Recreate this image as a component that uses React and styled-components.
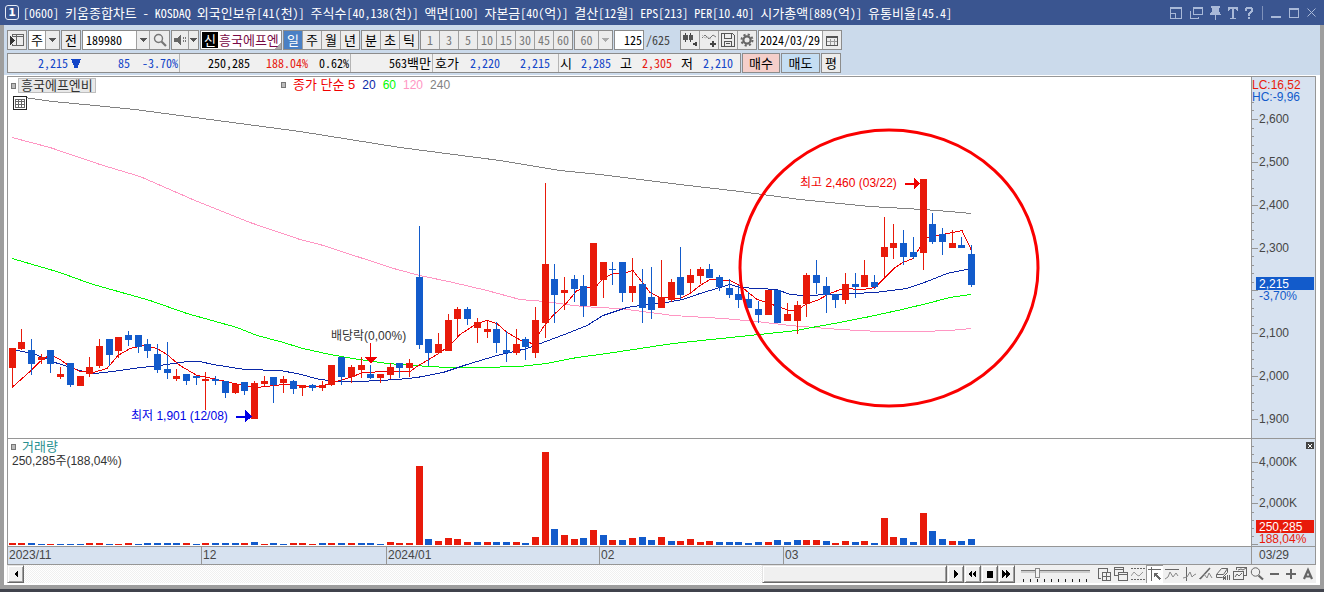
import React from 'react';
import styled, { createGlobalStyle, css } from 'styled-components';

const RED = '#e81a0a';
const BLUE = '#125bcb';
const LINE = '#969696';
const MONO = '"Noto Sans Mono CJK KR", "Noto Sans CJK KR", monospace';
const SANS = '"Liberation Sans", "Noto Sans CJK KR", sans-serif';

const Global = createGlobalStyle`
	* { box-sizing: border-box; }
	body { margin: 0; background: #40434c; }
	button, input, select { font: inherit; color: inherit; margin: 0; padding: 0; border: 0; border-radius: 0; }
`;

/* ---------- data ---------- */

// [up, high, body top, body bottom, low, volume]
const candles = [
	[1,348,348,368,388,2],[1,329,342,349,350,2],[0,339,350,364,375,2],[1,354,357,360,364,1],[0,350,350,364,373,1],
	[1,367,374,377,379,1],[0,363,363,385,387,1],[1,376,376,386,386,1],[1,357,367,374,377,2],[1,339,346,366,368,2],
	[0,339,339,355,366,1],[1,337,337,351,358,1],[0,331,335,340,346,2],[0,335,335,347,353,1],[0,339,344,351,358,2],
	[0,344,354,370,373,2],[0,342,369,373,379,2],[1,369,376,379,381,2],[0,374,374,381,385,2],[0,376,376,378,385,1],
	[1,372,379,381,410,2],[0,376,379,381,385,2],[0,381,381,393,398,2],[1,384,384,393,394,2],[0,382,382,391,395,2],
	[1,381,383,419,419,3],[1,376,381,384,386,1],[0,377,377,385,403,2],[1,376,379,383,393,1],[0,380,381,389,394,2],
	[1,385,385,388,396,2],[0,384,385,388,391,1],[1,381,385,388,391,2],[1,365,365,385,386,2],[0,357,357,377,385,2],
	[1,365,367,377,383,2],[1,357,365,370,378,2],[0,365,374,378,379,2],[1,374,374,378,383,1],[1,363,367,375,379,3],
	[0,363,363,368,378,2],[1,359,363,368,377,2],[0,226,277,345,349,79],[0,339,339,353,366,6],[1,333,344,353,354,4],
	[1,314,320,351,351,7],[1,307,309,319,336,6],[0,307,309,319,325,3],[1,318,322,328,343,3],[1,321,329,332,338,3],
	[0,322,329,343,353,3],[0,331,350,353,362,3],[1,329,344,353,355,3],[0,337,339,347,360,2],[1,307,320,353,358,8],
	[1,183,264,323,338,93],[0,264,279,295,323,16],[1,277,290,293,310,10],[0,275,279,289,302,6],[0,275,286,306,317,7],
	[1,243,243,306,306,15],[1,262,262,280,298,10],[0,262,269,270,285,5],[0,262,262,293,302,5],[1,258,286,293,302,7],
	[0,269,284,308,323,8],[0,267,297,310,319,5],[1,260,297,308,308,8],[1,279,282,300,302,4],[0,247,277,295,299,4],
	[1,269,275,283,292,6],[1,267,269,276,284,3],[0,264,269,278,278,4],[0,275,277,287,291,3],[0,279,288,295,298,3],
	[0,285,294,300,308,3],[0,292,299,308,308,2],[0,301,309,315,323,3],[1,290,290,315,315,3],[0,290,290,323,323,5],
	[1,303,314,321,321,3],[1,301,305,321,334,5],[1,273,275,304,317,5],[0,260,275,283,294,5],[0,277,286,295,313,4],
	[0,294,294,300,308,2],[1,273,284,300,304,4],[0,273,284,287,298,3],[1,260,275,287,287,4],[0,275,282,287,289,2],
	[1,217,247,257,277,27],[1,224,243,248,259,8],[0,230,243,257,265,7],[0,237,252,257,259,3],[1,179,179,253,270,32],
	[0,213,224,242,244,14],[0,228,234,242,255,6],[1,230,243,248,248,4],[0,237,245,248,248,4],[0,245,254,285,287,6],
];

// volume bars follow the day's volume change, not the price
const volumeColors =
	'rrbbrbbbrr' + 'brrbbbbbrb' + 'rbbbrbrbbr' + 'rrbrbrbbbr' + 'rrrbrrrrbr' +
	'bbrbrrbrrb' + 'rbrbrbbrbr' + 'rrrbbbbbrb' + 'bbrrbrrbrb' + 'rrbbrbbrbb';

const averages = [
	{ name: '240', color: '#828282', d: 'M15 96 24 97 53 101 95 105 135 109 240 123 300 131 400 147 500 160 560 170 600 174 680 184 740 191 800 199 820 201 870 206 923 209 950 211 971 213' },
	{ name: '120', color: '#ff96c3', d: 'M12 137 50 147 100 164 140 176 195 200 250 222 300 239 320 244 360 257 397 269 420 275 453 282 487 290 520 299 545 301 573 305 597 307 620 308 650 312 673 315 723 318 757 321 790 325 840 329 880 331 920 331 950 330 971 328' },
	{ name: '60', color: '#00fa00', d: 'M12 258 60 272 90 283 150 300 187 313 237 327 257 335 280 341 303 348 330 354 353 358 387 363 413 365 447 367 480 367 520 366 547 363 577 357 607 353 640 348 673 343 740 336 797 330 817 326 840 322 870 316 902 309 927 303 950 297 971 294' },
	{ name: '20', color: '#0a28a8', d: 'M12 349 17 350 33 353 43 357 55 362 83 371 95 373 113 371 133 368 160 365 187 361 200 361 213 364 245 369 280 370 297 373 320 379 340 381 360 381 397 379 417 377 443 372 467 364 497 355 527 348 543 342 567 333 587 325 603 315 627 307 640 305 660 303 683 299 700 293 720 287 730 284 740 287 777 289 790 294 803 295 833 294 875 292 907 288 927 281 947 273 971 268' },
	{ name: '5', color: '#f00000', d: 'M12 387 30 371 40 361 50 354 60 359 70 366 80 371 93 372 107 368 118 355 130 348 143 345 157 348 167 354 180 365 197 375 213 378 230 382 243 385 257 387 283 384 310 386 320 386 333 382 350 377 363 372 387 371 410 371 417 366 437 354 450 345 460 334 477 323 487 320 497 323 507 332 523 341 533 343 543 327 553 315 567 302 577 290 597 285 603 278 613 273 623 273 633 270 650 292 660 297 680 298 690 293 700 285 710 279 730 280 740 285 757 299 767 302 780 307 790 310 798 309 807 303 817 300 830 293 843 288 863 289 875 287 885 277 895 267 903 262 913 258 920 247 927 237 943 234 962 230 971 249' },
];

const candleX = i => Math.floor(12.2 + i * 9.69);

/* ---------- window ---------- */

const Frame = styled.div`
	min-height: 100vh;
	display: flex;
	flex-direction: column;
	font: 12px/16px ${MONO};
	color: #000;
	background: #40434c;
`;

const TitleBar = styled.header`
	display: flex;
	align-items: center;
	height: 25px;
	padding: 0 5px;
	background: #3a5590;
	color: #fff;
`;

const Badge = styled.span`
	width: 14px;
	height: 15px;
	margin-right: 4px;
	border: 1px solid #e8edf6;
	border-radius: 3px;
	font: bold 11px/13px "DejaVu Sans", sans-serif;
	text-align: center;
`;

const Title = styled.h1`
	flex: 1;
	margin: 0;
	font: 12px/18px ${MONO};
	white-space: pre;
	overflow: hidden;
`;

const Korean = styled.span`
	font-size: 13px;
`;

const WindowButton = styled.button`
	width: ${p => p.$w || 19}px;
	height: 19px;
	display: grid;
	place-items: center;
	background: none;
	color: #a9b9d8;
`;

const Separator = styled.i`
	width: 1px;
	height: 14px;
	margin: 0 3px 0 5px;
	background: #7f92bb;
`;

const Body = styled.main`
	background: #fff;
	border: solid #9e9e9e;
	border-width: 0 4px 4px;
`;

const Tools = styled.div`
	background: #cbdaeb;
	padding: 5px 3px 2px;
`;

const Bar = styled.div`
	display: flex;
	gap: 1px;
	height: 20px;
	margin-bottom: ${p => p.$last ? 0 : 3}px;
`;

const Group = styled.div`
	display: flex;
	width: ${p => p.$w}px;
	border: 1px solid #8c8c8c;
	background: #ececec;
	> * + * { border-left: 1px solid #a0a0a0; }
`;

const Tool = styled.button`
	flex: ${p => p.$w ? `0 0 ${p.$w}px` : '1 1 0'};
	min-width: 0;
	display: grid;
	place-items: center;
	font-size: ${p => p.$dim ? 12 : 13}px;
	background: ${p => p.$on ? '#4a80c4' : '#ececec'};
	color: ${p => p.$on ? '#fff' : p.$dim ? '#787878' : '#000'};
`;

const Field = styled.input`
	flex: 1;
	min-width: 0;
	width: 100%;
	padding: 0 ${p => p.$tight ? 1 : 3}px;
	text-align: ${p => p.$right ? 'right' : 'left'};
	background: #fff;
	outline: none;
`;

const Pick = styled.select`
	flex: 1;
	min-width: 0;
	padding: 0 1px;
	appearance: none;
	text-align: center;
	font-size: ${p => p.$dim ? 12 : 13}px;
	background: ${p => p.$dim ? '#ececec' : '#fff'};
	color: ${p => p.$dim ? '#787878' : '#000'};
`;

const Stock = styled.div`
	display: flex;
	align-items: center;
	width: 82px;
	padding-left: 1px;
	border: 1px solid #8c8c8c;
	background: linear-gradient(135deg, transparent 50%, #aaa 50%) 100% 100% / 6px 6px no-repeat #fff;
	color: #780a46;
	font-size: 13px;
	white-space: nowrap;
	b {
		flex: none;
		width: 16px;
		height: 16px;
		margin-right: 1px;
		background: #000;
		color: #fff;
		font-weight: 400;
		text-align: center;
	}
`;

const Total = styled.span`
	width: 34px;
	padding-left: 1px;
	line-height: 20px;
	color: #444;
`;

const Quotes = styled.div`
	display: flex;
	width: 734px;
	border: 1px solid #8c8c8c;
	background: #f0f0f0;
	line-height: 18px;
`;

const Cell = styled.div`
	display: flex;
	width: ${p => p.$w}px;
	border-right: 1px solid #b4b4b4;
	white-space: nowrap;
	&:last-child { border: 0; flex: 1; }
`;

const tones = { up: '#e6190f', down: '#1446c8' };

const Value = styled.span`
	width: ${p => p.$w}px;
	flex: none;
	text-align: right;
	color: ${p => tones[p.$tone] || '#000'};
`;

const Order = styled.button`
	width: ${p => p.$w}px;
	border: 1px solid #8c8c8c;
	font-size: 13px;
	line-height: 16px;
	background: ${p => p.$bg};
`;

/* ---------- chart ---------- */

const Chart = styled.section`
	display: grid;
	grid-template-columns: 1fr 64px;
	margin: 1px 4px 0 3px;
	border: 1px solid ${LINE};
	font: 12px/14px ${SANS};
`;

const Pane = styled.div`
	position: relative;
	height: ${p => p.$h}px;
	min-width: 0;
	overflow: hidden;
	border-bottom: ${p => p.$end ? 0 : 1}px solid ${LINE};
	svg { display: block; }
`;

const Scale = styled(Pane)`
	border-left: 1px solid ${LINE};
	background: #d7e2f0;
	color: #464646;
`;

const Legend = styled.div`
	position: absolute;
	top: 1px;
	left: ${p => p.$x}px;
	display: flex;
	align-items: center;
	gap: ${p => p.$gap}px;
	color: ${p => p.$color || '#333'};
`;

const Dot = styled.i`
	width: 5px;
	height: 6px;
	border: 1px solid #777;
	background: #bbb;
`;

const NameTag = styled.span`
	height: 15px;
	padding: 0 2px;
	border: 1px solid #bebebe;
	background: #e8e8e8;
	color: #333;
	font-size: 13px;
	line-height: 13px;
`;

const GridButton = styled.button`
	position: absolute;
	top: 19px;
	left: 5px;
	width: 14px;
	height: 14px;
	background: #fff;
`;

const VolumeText = styled.div`
	position: absolute;
	top: 15px;
	left: 4px;
	color: #333;
`;

const CloseBox = styled.button`
	position: absolute;
	top: 3px;
	right: 1px;
	width: 8px;
	height: 7px;
	background: #444;
	svg { margin: 0 auto; }
`;

const Months = styled(Pane)`
	display: flex;
	background: #d7e2f0;
	color: #464646;
`;

const Month = styled.span`
	width: ${p => p.$w}px;
	padding-left: 1px;
	line-height: 16px;
	& + & { border-left: 1px solid ${LINE}; }
`;

const LastDate = styled(Scale)`
	padding-left: 7px;
	line-height: 16px;
`;

/* ---------- bottom bar ---------- */

const Footer = styled.footer`
	display: flex;
	height: 18px;
	margin: 0 4px 2px 3px;
	background: #f0f0f0;
`;

const raised = css`
	border: 1px solid;
	border-color: #e3e3e3 #696969 #696969 #e3e3e3;
	box-shadow: inset 1px 1px #fff, inset -1px -1px #a0a0a0;
	background: #f0f0f0;
`;

const ScrollButton = styled.button`
	${raised}
	flex: none;
	width: 17px;
	display: grid;
	place-items: center;
`;

const Track = styled.div`
	flex: 1;
	display: flex;
	justify-content: flex-end;
	background: repeating-conic-gradient(#f0f0f0 0 25%, #fff 0 50%) 0 0 / 2px 2px;
`;

const Thumb = styled.div`
	${raised}
	width: 185px;
`;

const Zoom = styled.label`
	width: 80px;
	padding: 1px 5px 0 6px;
	&::after {
		content: '';
		display: block;
		height: 3px;
		margin-left: 2px;
		background: repeating-linear-gradient(90deg, #222 0 1px, transparent 1px 7px);
	}
`;

const Range = styled.input`
	appearance: none;
	display: block;
	width: 100%;
	height: 13px;
	background: linear-gradient(#777 0 1px, #ccc 1px 3px) 0 4px / 100% 3px no-repeat;
	&::-webkit-slider-thumb {
		appearance: none;
		width: 5px;
		height: 10px;
		border: 1px solid #888;
		background: #f4f4f4;
	}
`;

const ChartTool = styled.button`
	width: 17px;
	display: grid;
	place-items: center;
	color: #666;
	background: ${p => p.$on ? '#fff' : 'none'};
	box-shadow: ${p => p.$on ? 'inset 1px 1px #999' : 'none'};
`;

/* ---------- icons ---------- */

const Icon = ({ w = 14, h = 14, children, ...rest }) => (
	<svg width={w} height={h} viewBox={`0 0 ${w} ${h}`} fill="none" stroke="currentColor" shapeRendering="crispEdges" aria-hidden="true" {...rest}>
		{children}
	</svg>
);

const Down = ({ dim }) => <Icon w={7} h={4}><path d="M0 0h7l-3.5 4z" fill={dim ? '#aaa' : '#555'} stroke="none" /></Icon>;

const Magnifier = () => (
	<Icon stroke="#777" shapeRendering="auto">
		<circle cx="5.5" cy="5.5" r="4" strokeWidth="1.4" />
		<path d="M8.5 8.5l4.5 4.5" strokeWidth="2.2" />
	</Icon>
);

const chartTools = [
	['새 창', <><path d="M4 11.500H1.500v-10h9v3" /><path d="M5.500 5.500h8v8h-8zM9.500 6v7M6 9.500h7" /></>],
	['겹치기', <><path d="M.5 .5h9v8h-9zM.5 2.500h9" /><path d="M4.500 5.500h9v8h-9z" fill="#f0f0f0" /><path d="M4.500 7.500h9" /></>],
	['수치 조회', <><path d="M0 1.500h14M0 12.500h14" strokeDasharray="2 1" /><path d="M0 9l3-4 3 3 2 1 4-4" stroke="#999" shapeRendering="auto" /></>],
	['십자선', <><path d="M0 2.500h13M3.500 0v14" /><path d="M6 6h5l-2 1.500 4 4-1.500 1.500-4-4L6 11z" fill="#666" stroke="none" /></>],
	['추세선', <><path d="M0 2.500h14" /><path d="M0 12l3-2 2-5 3 5 3-4 2 3" stroke="#888" shapeRendering="auto" /></>],
	['수직선', <><path d="M4.500 0v14" /><path d="M1 11l4-1 3-5 2 5 2-2 2-1" stroke="#888" shapeRendering="auto" /></>],
	['각도선', <g shapeRendering="auto"><path d="M1 12L11 1" strokeWidth="1.6" /><path d="M0 12l5-5 3 4 2-5 3 5" stroke="#888" /></g>],
	['전체 지우기', <><path d="M.5 7.500l5-6h6l-4 6zM.5 7.500v3h6l5-5v-4" shapeRendering="auto" /><path d="M7.500 13V9l2 4V9M11.500 8v5M13.500 8v5" /></>],
	['이미지 저장', <><path d="M3.500 3V.5h10v8H11" /><path d="M.5 4.500h10v8H.5z" fill="#f0f0f0" /><path d="M2 10l2-3 2 2 3-3M5 3l3-1 2 1 3-2" shapeRendering="auto" /></>],
	['확대 보기', <g shapeRendering="auto"><circle cx="5.5" cy="5" r="4.2" /><path d="M8.500 8.500l4.500 4" strokeWidth="2.2" /></g>],
	['축소', <path d="M3 7h9" strokeWidth="2" />],
	['확대', <path d="M2 7h10M7 2v10" strokeWidth="2" />],
	['글자', <path d="M3 12L7 3l4 9M4.500 9.500h5" strokeWidth="2.2" shapeRendering="auto" />],
];

/* ---------- parts ---------- */

const title = '[0600] 키움종합차트 - KOSDAQ 외국인보유[41(천)] 주식수[40,138(천)] 액면[100] 자본금[40(억)] 결산[12월] EPS[213] PER[10.40] 시가총액[889(억)] 유통비율[45.4]';

const mixed = text => text.split(/([가-힣]+)/).map((part, i) => i % 2 ? <Korean key={i}>{part}</Korean> : part);

function MainBar() {
	return (
		<Bar>
			<Group $w={20}>
				<Tool aria-label="메뉴">
					<Icon w={14} h={13} stroke="#666"><path d="M2.500 3V.5h11v11h-11V10M6.500 .5v11M3 2.500h10" /><path d="M0 2v9l5-4.500z" fill="#333" stroke="none" /></Icon>
				</Tool>
			</Group>
			<Group $w={32}>
				<Pick aria-label="종목 구분"><option>주</option></Pick>
				<Tool $w={14} aria-label="종목 구분 열기"><Down /></Tool>
			</Group>
			<Group $w={20}><Tool>전</Tool></Group>
			<Group $w={88}>
				<Field aria-label="종목코드" defaultValue="189980" />
				<Tool $w={13} aria-label="최근 종목"><Down /></Tool>
				<Tool $w={20} aria-label="종목 검색"><Magnifier /></Tool>
			</Group>
			<Group $w={28}>
				<Tool aria-label="소리">
					<Icon w={13} h={12}><path d="M0 4h3l4-4v12L3 8H0z" fill="#666" stroke="none" /><path d="M9.500 3v6M11.500 3v6" strokeDasharray="2 1" stroke="#777" /></Icon>
				</Tool>
				<Tool $w={10} aria-label="소리 설정"><Down /></Tool>
			</Group>
			<Stock><b>신</b>흥국에프엔</Stock>
			<Group $w={77}>
				{['일', '주', '월', '년'].map((t, i) => <Tool key={t} $on={i === 0}>{t}</Tool>)}
			</Group>
			<Group $w={58}>
				{['분', '초', '틱'].map(t => <Tool key={t}>{t}</Tool>)}
			</Group>
			<Group $w={153}>
				{[1, 3, 5, 10, 15, 30, 45, 60].map(n => <Tool key={n} $dim>{n}</Tool>)}
			</Group>
			<Group $w={39}>
				<Pick $dim aria-label="분 간격"><option>60</option></Pick>
				<Tool $w={14} aria-label="분 간격 열기"><Down dim /></Tool>
			</Group>
			<Group $w={30}><Field $right $tight aria-label="조회 개수" defaultValue="125" /></Group>
			<Total>/625</Total>
			<Group $w={77}>
				<Tool aria-label="차트 유형">
					<Icon stroke="#444"><path d="M2.500 0v9M7.500 0v9" /><path d="M0 2h5v5H0zM6 2h4v5H6z" fill="#555" stroke="none" /><path d="M14 9v4l-4-2zM10 11h4" fill="#444" /></Icon>
				</Tool>
				<Tool aria-label="지표 추가">
					<Icon stroke="#444"><path d="M0 5l3-3 4 4 4-4 3 2" stroke="#777" shapeRendering="auto" /><path d="M0 2l3 3 3-1 3 2" stroke="#bbb" shapeRendering="auto" /><path d="M11 8v6M8 11h6" strokeWidth="2" /></Icon>
				</Tool>
				<Tool aria-label="저장">
					<Icon stroke="#555"><path d="M.5 .5h11l2 2v11H.5zM3.500 .5v5h7v-5M3.500 13.500v-5h7v5M5 10.500h4" /></Icon>
				</Tool>
				<Tool aria-label="설정">
					<Icon stroke="#666" shapeRendering="auto"><circle cx="7" cy="7" r="3.6" strokeWidth="2.2" /><circle cx="7" cy="7" r="5.5" strokeWidth="2" strokeDasharray="2.16 2.16" /></Icon>
				</Tool>
			</Group>
			<Group $w={84}>
				<Field $tight aria-label="조회일" defaultValue="2024/03/29" />
				<Tool $w={19} aria-label="달력">
					<Icon w={12} h={11} stroke="#555"><path d="M.5 1.500h11v9H.5zM1 2.500h10" /><path d="M4.500 4v6M8.500 4v6M1 6.500h10" stroke="#999" /></Icon>
				</Tool>
			</Group>
		</Bar>
	);
}

function QuoteBar() {
	return (
		<Bar $last>
			<Quotes>
				<Cell $w={172}>
					<Value $w={60} $tone="down">2,215</Value>
					<Value $w={13} $tone="down"><Icon w={10} h={9}><path d="M0 0h10L6.500 9h-3z" fill="#1446c8" stroke="none" /></Icon></Value>
					<Value $w={49} $tone="down">85</Value>
					<Value $w={48} $tone="down">-3.70%</Value>
				</Cell>
				<Cell $w={171}>
					<Value $w={70}>250,285</Value>
					<Value $w={58} $tone="up">188.04%</Value>
					<Value $w={41}>0.62%</Value>
				</Cell>
				<Cell $w={82}><Value $w={80}>{mixed('563백만')}</Value></Cell>
				<Cell $w={126}>
					<Value $w={26}>{mixed('호가')}</Value>
					<Value $w={41} $tone="down">2,220</Value>
					<Value $w={50} $tone="down">2,215</Value>
				</Cell>
				<Cell>
					<Value $w={13}>{mixed('시')}</Value>
					<Value $w={39} $tone="down">2,285</Value>
					<Value $w={21}>{mixed('고')}</Value>
					<Value $w={40} $tone="up">2,305</Value>
					<Value $w={21}>{mixed('저')}</Value>
					<Value $w={40} $tone="down">2,210</Value>
				</Cell>
			</Quotes>
			<Order $w={38} $bg="#f5cfca">매수</Order>
			<Order $w={39} $bg="#c5def3">매도</Order>
			<Order $w={20} $bg="#ececec">평</Order>
		</Bar>
	);
}

function PriceChart() {
	return (
		<svg width="1242" height="361" shapeRendering="crispEdges">
			<g transform="translate(-8 -77)">
				{averages.map(a => <path key={a.name} d={a.d} stroke={a.color} fill="none" transform="translate(0 .5)" />)}
				{candles.map(([up, high, top, bottom, low], i) => (
					<g key={i} fill={up ? RED : BLUE}>
						<rect x={candleX(i)} y={high} width="1" height={low - high} />
						<rect x={candleX(i) - 3} y={top} width="7" height={bottom - top} />
					</g>
				))}
				<g fill="#0000e6">
					<text x="131" y="420">최저 1,901 (12/08)</text>
					<path d="M236 416h9v-6l7 6.500-7 6v-5h-9z" />
				</g>
				<g fill="#f00000">
					<text x="800" y="187">최고 2,460 (03/22)</text>
					<path d="M905 183h9v-6l6 6.500-6 6v-5h-9z" />
				</g>
				<text x="331" y="340" fill="#333">배당락(0,00%)</text>
				<path d="M370 343h1v14h6l-6 6h-1l-6-6h6z" fill="#f00000" />
				<ellipse cx="889" cy="268" rx="149" ry="138" fill="none" stroke="#fa0000" strokeWidth="3" shapeRendering="auto" />
			</g>
		</svg>
	);
}

function PriceScale() {
	const minor = [];
	for (let k = 0; k < 38; k++) minor.push(Math.round(419 - k * 8.57));
	return (
		<svg width="63" height="361" fill="#464646" shapeRendering="crispEdges">
			<g transform="translate(-1252 -77)">
				{minor.map(y => <rect key={y} x="1252" y={y} width="2" height="1" fill={LINE} />)}
				{[2600, 2500, 2400, 2300, 2200, 2100, 2000, 1900].map(v => {
					const y = Math.round(119 + (2600 - v) * 0.4286);
					return (
						<g key={v}>
							<rect x="1252" y={y} width="6" height="1" fill={LINE} />
							{v !== 2200 && <text x="1259" y={y + 4}>{v.toLocaleString('en-US')}</text>}
						</g>
					);
				})}
				<text x="1252" y="89" fill={RED}>LC:16,52</text>
				<text x="1252" y="101" fill={BLUE}>HC:-9,96</text>
				<rect x="1256" y="277" width="58" height="13" fill={BLUE} />
				<text x="1259" y="288" fill="#fff">2,215</text>
				<text x="1259" y="300" fill={BLUE}>-3,70%</text>
			</g>
		</svg>
	);
}

function VolumeChart() {
	return (
		<svg width="1242" height="106" shapeRendering="crispEdges">
			{candles.map((c, i) => (
				<rect key={i} x={candleX(i) - 11} y={106 - c[5]} width="7" height={c[5]} fill={volumeColors[i] === 'r' ? RED : BLUE} />
			))}
		</svg>
	);
}

function VolumeScale() {
	return (
		<svg width="63" height="107" fill="#464646" shapeRendering="crispEdges">
			<g transform="translate(-1252 -439)">
				{[446, 454, 462, 471, 479, 487, 495, 503, 512, 520, 528, 536].map(y => (
					<rect key={y} x="1252" y={y} width="2" height="1" fill={LINE} />
				))}
				{[462, 503, 544].map(y => <rect key={y} x="1252" y={y} width="6" height="1" fill={LINE} />)}
				<text x="1259" y="466">4,000K</text>
				<text x="1259" y="507">2,000K</text>
				<rect x="1256" y="520" width="58" height="13" fill={RED} />
				<text x="1259" y="531" fill="#fff">250,285</text>
				<text x="1259" y="543" fill={RED}>188,04%</text>
			</g>
		</svg>
	);
}

function App() {
	return (
		<Frame>
			<Global />
			<TitleBar>
				<Badge>1</Badge>
				<Title>{mixed(title)}</Title>
				<WindowButton $w={21} aria-label="크기 고정"><Icon w={12} h={12}><path d="M.5 .5h11v11H.5zM1 1.500h10M.5 6.500h5v5" /></Icon></WindowButton>
				<WindowButton $w={20} aria-label="창 복제"><Icon w={13} h={12}><path d="M3.500 .5h9v7h-9zM4 1.500h8M.5 4v7.500h8V10" /></Icon></WindowButton>
				<WindowButton $w={18} aria-label="고정"><Icon w={11} h={14}><path d="M1 0h9v2H9v4h1l1 3H0l1-3h1V2H1zM5 9h1v5H5z" fill="currentColor" stroke="none" /></Icon></WindowButton>
				<WindowButton $w={17} aria-label="글꼴"><Icon w={10} h={12}><path d="M0 0h10v4H9L8 2H6v9h2v1H2v-1h2V2H2L1 4H0z" fill="currentColor" stroke="none" /></Icon></WindowButton>
				<WindowButton $w={16} aria-label="도움말"><Icon w={8} h={12}><path d="M1 4V2l1-1h4l1 1v2L4 7v2M4 10v2" strokeWidth="2" /></Icon></WindowButton>
				<Separator />
				<WindowButton aria-label="최소화"><Icon w={10} h={12}><path d="M0 10h10" strokeWidth="2" /></Icon></WindowButton>
				<WindowButton $w={18} aria-label="최대화"><Icon w={10} h={10}><path d="M.5 .5h9v9h-9zM0 1.500h10" /></Icon></WindowButton>
				<WindowButton $w={16} aria-label="닫기"><Icon w={9} h={9}><path d="M.5 .5l8 8M8.500 .5l-8 8" shapeRendering="auto" /></Icon></WindowButton>
			</TitleBar>
			<Body>
				<Tools>
					<MainBar />
					<QuoteBar />
				</Tools>
				<Chart>
					<Pane $h={362}>
						<PriceChart />
						<Legend $x={3} $gap={2}><Dot /><NameTag>흥국에프엔비</NameTag></Legend>
						<Legend $x={273} $gap={7} $color="#f00000">
							<Dot />
							<Korean>종가 단순 5</Korean>
							<span style={{ color: averages[3].color }}>20</span>
							<span style={{ color: averages[2].color }}>60</span>
							<span style={{ color: averages[1].color }}>120</span>
							<span style={{ color: averages[0].color }}>240</span>
						</Legend>
						<GridButton aria-label="데이터 표">
							<Icon stroke="#222"><path d="M.5 .5h13v13H.5z" /><path d="M2.500 3.500h9v8h-9zM2.500 5.500h9M2.500 8.500h9M5.500 3.500v8M8.500 3.500v8" stroke="#666" /></Icon>
						</GridButton>
					</Pane>
					<Scale $h={362}><PriceScale /></Scale>
					<Pane $h={108}>
						<VolumeChart />
						<Legend $x={3} $gap={6} $color="#289090"><Dot /><Korean>거래량</Korean></Legend>
						<VolumeText>250,285주(188,04%)</VolumeText>
					</Pane>
					<Scale $h={108}>
						<VolumeScale />
						<CloseBox aria-label="거래량 닫기"><Icon w={4} h={4} stroke="#fff"><path d="M0 0l4 4M4 0L0 4" /></Icon></CloseBox>
					</Scale>
					<Months $h={17} $end>
						<Month $w={193}>2023/11</Month>
						<Month $w={185}>12</Month>
						<Month $w={213}>2024/01</Month>
						<Month $w={184}>02</Month>
						<Month>03</Month>
					</Months>
					<LastDate $h={17} $end>03/29</LastDate>
				</Chart>
				<Footer>
					<ScrollButton aria-label="왼쪽"><Icon w={4} h={8}><path d="M4 0v8L0 4z" fill="#000" stroke="none" /></Icon></ScrollButton>
					<Track><Thumb /></Track>
					<ScrollButton aria-label="오른쪽"><Icon w={4} h={8}><path d="M0 0v8l4-4z" fill="#000" stroke="none" /></Icon></ScrollButton>
					<ScrollButton aria-label="뒤로"><Icon w={9} h={8}><path d="M4 0v8L0 4zM8 0v8L4 4z" fill="#000" stroke="none" /></Icon></ScrollButton>
					<ScrollButton aria-label="정지"><Icon w={6} h={7}><path d="M0 0h6v7H0z" fill="#000" stroke="none" /></Icon></ScrollButton>
					<ScrollButton aria-label="앞으로"><Icon w={9} h={8}><path d="M0 0v8l4-4zM4 0v8l4-4z" fill="#000" stroke="none" /></Icon></ScrollButton>
					<Zoom><Range type="range" aria-label="확대 비율" defaultValue="22" /></Zoom>
					{chartTools.map(([name, art], i) => (
						<ChartTool key={name} $on={i === 3} aria-label={name}><Icon>{art}</Icon></ChartTool>
					))}
				</Footer>
			</Body>
		</Frame>
	);
}

export default App;
